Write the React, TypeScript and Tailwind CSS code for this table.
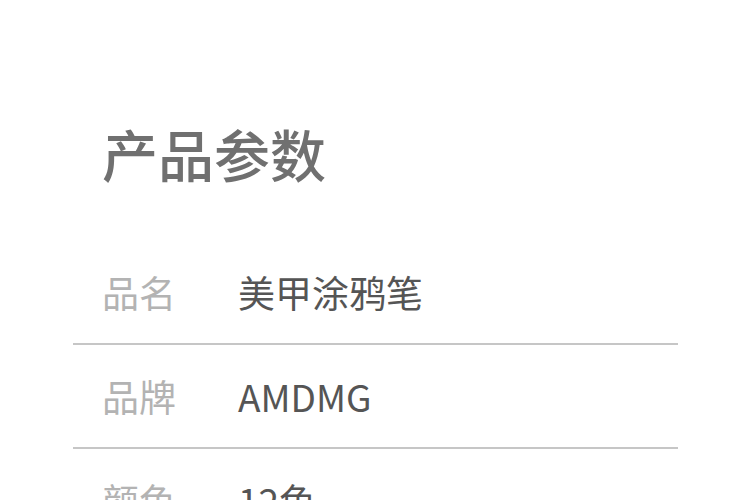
export default function App() {
  const rows = [
    ["品名", "美甲涂鸦笔"],
    ["品牌", "AMDMG"],
    ["颜色", "12色"],
  ];
  return (
    <div
      className="w-[750px] h-[500px] overflow-hidden bg-white"
      style={{ fontFamily: '"Noto Sans CJK SC", "Noto Sans", sans-serif' }}
    >
      <div className="pl-[73px] pr-[72px] pt-[118px]">
        <h1 className="pl-[29px] text-[56px] leading-[70px] font-medium text-[#707070]">产品参数</h1>
        <div className="mt-[53px]">
          {rows.map(([k, v]) => (
            <div key={k} className="flex items-center h-[104px] border-b-2 border-[#c6c6c6] pt-[2px]">
              <div className="pl-[29px] w-[165px] text-[37px] text-[#b3b3b3]">{k}</div>
              <div className="text-[37px] text-[#555555]">{v}</div>
            </div>
          ))}
        </div>
      </div>
    </div>
  );
}
